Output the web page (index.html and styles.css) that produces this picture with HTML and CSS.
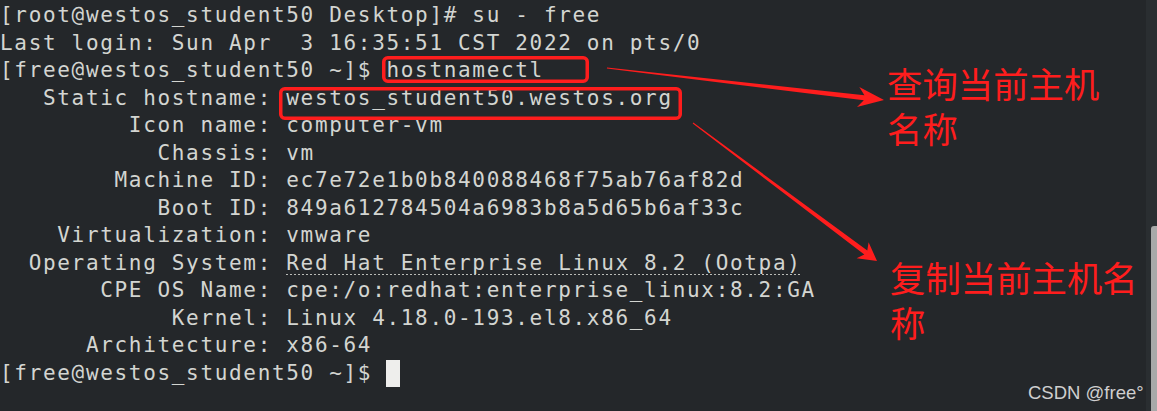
FILE: index.html
```html
<!DOCTYPE html>
<html lang="zh-CN">
<head>
<meta charset="utf-8">
<title>hostnamectl</title>
<link rel="stylesheet" href="styles.css">
</head>
<body>
<div class="window">
  <pre class="terminal">[root@westos_student50 Desktop]# su - free
Last login: Sun Apr  3 16:35:51 CST 2022 on pts/0
[free@westos_student50 ~]$ hostnamectl
   Static hostname: westos_student50.westos.org
         Icon name: computer-vm
           Chassis: vm
        Machine ID: ec7e72e1b0b840088468f75ab76af82d
           Boot ID: 849a612784504a6983b8a5d65b6af33c
    Virtualization: vmware
  Operating System: <span class="link">Red Hat Enterprise Linux 8.2 (Ootpa)</span>
       CPE OS Name: cpe:/o:redhat:enterprise_linux:8.2:GA
            Kernel: Linux 4.18.0-193.el8.x86_64
      Architecture: x86-64
[free@westos_student50 ~]$ <span class="cursor"> </span></pre>
  <div class="scrollbar"><div class="thumb"></div></div>

  <svg class="marks" width="1157" height="411" viewBox="0 0 1157 411">
    <rect x="383.75" y="57.75" width="203.5" height="23.5" rx="4" class="box"/>
    <rect x="280.75" y="88.75" width="399.5" height="29.5" rx="4" class="box"/>
    <polygon class="arrow" points="607,67.5 864.4,95.2 859.3,87.1 884,100 857,106.9 863.8,100.2 606.9,68.5"/>
    <polygon class="arrow" points="693.3,122.6 867.3,250.6 868.6,242.2 877,261 856.6,258.2 864.3,254.6 692.7,123.4"/>
  </svg>
  <div class="note note-query">
    <div class="note-line">查询当前主机</div>
    <div class="note-line">名称</div>
  </div>
  <div class="note note-copy">
    <div class="note-line">复制当前主机名</div>
    <div class="note-line">称</div>
  </div>
  <div class="watermark">CSDN @free°</div>
</div>
</body>
</html>
```
FILE: styles.css
```css
html, body {
  margin: 0;
  padding: 0;
  background: #24272a;
}
.window {
  position: relative;
  display: flex;
  width: 1157px;
  height: 411px;
  overflow: hidden;
  background: #24272a;
}
.terminal {
  flex: 1;
  margin: 0;
  padding: 2px 0 0 0;
  font-family: "DejaVu Sans Mono", monospace;
  font-size: 21px;
  letter-spacing: 1.67px;
  line-height: 27.5px;
  color: #d3d5d1;
  white-space: pre;
}
.link {
  background-image: linear-gradient(90deg, #b9bbb7 50%, transparent 50%);
  background-size: 4px 1px;
  background-repeat: repeat-x;
  background-position: 0 100%;
}
.cursor {
  display: inline-block;
  width: 14px;
  height: 27px;
  vertical-align: top;
  background: #eeeeec;
  letter-spacing: 0;
}
.scrollbar {
  width: 11px;
  display: flex;
  flex-direction: column;
  align-items: flex-end;
  background: #2a2e31;
}
.thumb {
  margin-top: 226px;
  width: 6px;
  flex: 1;
  background: #a8a9a9;
  border-radius: 3px 0 0 0;
}
.marks {
  position: absolute;
  left: 0;
  top: 0;
}
.box {
  fill: none;
  stroke: #fe1d1d;
  stroke-width: 3.5;
}
.arrow {
  fill: #fe1d1d;
}
.note {
  position: absolute;
  display: flex;
  flex-direction: column;
  gap: 6px;
  font-family: "Noto Sans CJK SC", sans-serif;
  font-size: 35.4px;
  line-height: 39px;
  color: #fe1d1d;
}
.note-query {
  left: 887px;
  top: 63px;
}
.note-copy {
  left: 890px;
  top: 257px;
}
.watermark {
  position: absolute;
  left: 1028px;
  top: 382px;
  font-family: "Liberation Sans", Arial, sans-serif;
  font-size: 18.5px;
  color: #cfcfcf;
}
```
